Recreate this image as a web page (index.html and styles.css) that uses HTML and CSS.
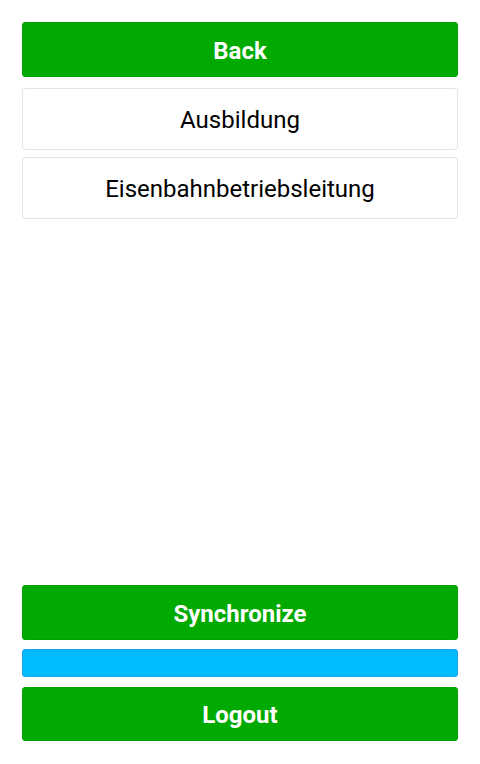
FILE: index.html
```html
<!DOCTYPE html>
<html>

<head>
    <link rel="stylesheet" href="styles.css">
</head>

<body>
    <div class="page">
        <div class="top">
            <button class="btn btn-green">Back</button>
            <ul class="list">
                <li>Ausbildung</li>
                <li>Eisenbahnbetriebsleitung</li>
            </ul>
        </div>

        <div class="bottom">
            <button class="btn btn-green">Synchronize</button>
            <div class="progress"></div>
            <button class="btn btn-green btn-logout">Logout</button>
        </div>
    </div>
</body>

</html>
```

FILE: styles.css
```css
html,
body {
    margin: 0;
    padding: 0;
    background: #fff;
    font-family: Roboto, "Liberation Sans", sans-serif;
}

.page {
    box-sizing: border-box;
    height: 764px;
    padding: 22px 22px 23px;
    display: flex;
    flex-direction: column;
    justify-content: space-between;
}

.btn {
    display: block;
    width: 100%;
    height: 55px;
    margin: 0;
    padding: 2px 0 0;
    border: 1px solid #00a000;
    border-radius: 3px;
    font-family: inherit;
    font-size: 24px;
    font-weight: bold;
    color: #fff;
}

.btn-green {
    background: #00aa00;
}

.btn-logout {
    height: 54px;
}

.list {
    list-style-type: none;
    margin: 11px 0 0;
    padding: 0;
    display: flex;
    flex-direction: column;
    gap: 7px;
}

.list>li {
    height: 62px;
    box-sizing: border-box;
    padding-top: 1px;
    border: 1px solid #e4e4e4;
    border-radius: 3px;
    display: flex;
    align-items: center;
    justify-content: center;
    font-size: 24px;
    color: #000;
}

.bottom {
    display: flex;
    flex-direction: column;
}

.progress {
    height: 28px;
    box-sizing: border-box;
    margin: 9px 0 10px;
    background: #00bbff;
    border: 1px solid #1aa3f5;
    border-radius: 3px;
}
```
